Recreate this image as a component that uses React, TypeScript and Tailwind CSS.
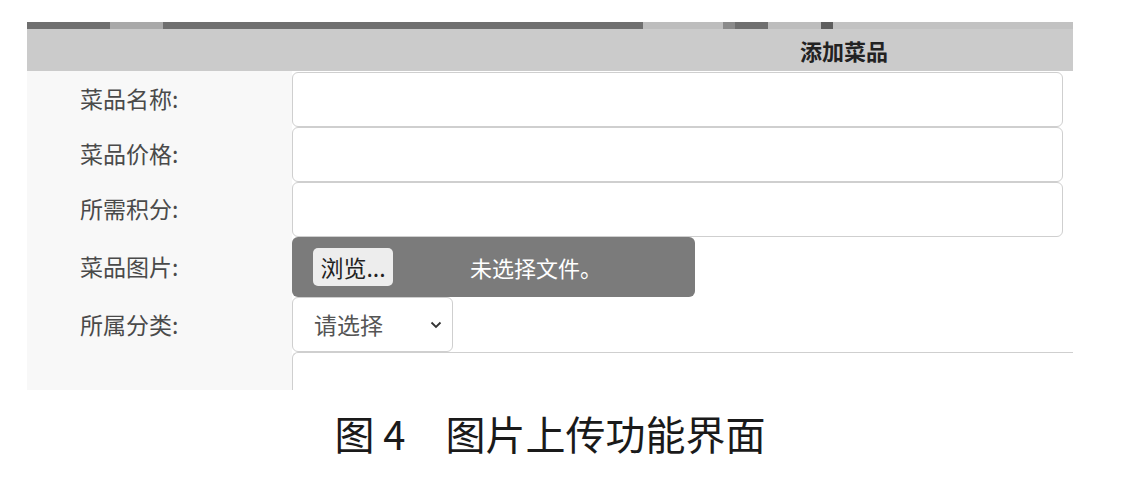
const cjk = { fontFamily: '"Noto Sans CJK SC", "Liberation Sans", sans-serif' };

function Label({ text }: { text: string }) {
  return (
    <div className="flex items-center pl-[53px] text-[23px] leading-none text-[#4a4a4a]">
      {text}
    </div>
  );
}

export default function App() {
  return (
    <div className="w-[1125px] h-[479px] bg-white pt-[22px] overflow-hidden" style={cjk}>
      <div className="ml-[27px] w-[1046px]">
        {/* top strip of the cropped window above */}
        <div className="flex h-[7px]">
          <div className="w-[83px] bg-[#6f6f6f]" />
          <div className="w-[53px] bg-[#a9a9a9]" />
          <div className="w-[480px] bg-[#6f6f6f]" />
          <div className="w-[80px] bg-[#bdbdbd]" />
          <div className="w-[12px] bg-[#8a8a8a]" />
          <div className="w-[33px] bg-[#6f6f6f]" />
          <div className="w-[53px] bg-[#bdbdbd]" />
          <div className="w-[12px] bg-[#5e5e5e]" />
          <div className="flex-1 bg-[#c2c2c2]" />
        </div>

        {/* header */}
        <div className="h-[42px] bg-[#cbcbcb] flex items-center pl-[773px]">
          <span className="text-[22px] font-bold leading-none text-[#222]">添加菜品</span>
        </div>

        {/* form */}
        <div className="grid grid-cols-[265px_1fr] h-[319px]">
          <div className="bg-[#f8f8f8] grid grid-rows-[55px_55px_55px_61px_55px_1fr]">
            <Label text="菜品名称:" />
            <Label text="菜品价格:" />
            <Label text="所需积分:" />
            <Label text="菜品图片:" />
            <Label text="所属分类:" />
            <div />
          </div>
          <div className="flex flex-col pt-px">
            <div className="h-[55px] mr-[10px] border border-[#cfcfcf] rounded-md bg-white" />
            <div className="h-[55px] mr-[10px] border border-[#cfcfcf] rounded-md bg-white" />
            <div className="h-[55px] mr-[10px] border border-[#cfcfcf] rounded-md bg-white" />
            <div className="h-[60px] w-[403px] rounded-md bg-[#7b7b7b] flex items-center pl-[21px]">
              <div className="h-[38px] w-[80px] rounded-[5px] bg-[#ededed] flex items-center justify-center text-[23px] leading-none text-[#222]">
                浏览...
              </div>
              <span className="ml-[77px] text-[22px] leading-none text-white">未选择文件。</span>
            </div>
            <div className="h-[55px] w-[161px] border border-[#cfcfcf] rounded-md bg-white flex items-center justify-between pl-[21px] pr-[10px]">
              <span className="text-[23px] leading-none text-[#555]">请选择</span>
              <svg width="12" height="8" viewBox="0 0 12 8" fill="none" stroke="#333" strokeWidth="1.8">
                <path d="M1.5 1.5 L6 6 L10.5 1.5" />
              </svg>
            </div>
            <div className="flex-1 border-t border-l border-[#cfcfcf] rounded-tl-md bg-white" />
          </div>
        </div>

        {/* caption */}
        <div className="mt-[23px] text-center text-[40px] leading-none text-[#1a1a1a]">
          图 4　图片上传功能界面
        </div>
      </div>
    </div>
  );
}
